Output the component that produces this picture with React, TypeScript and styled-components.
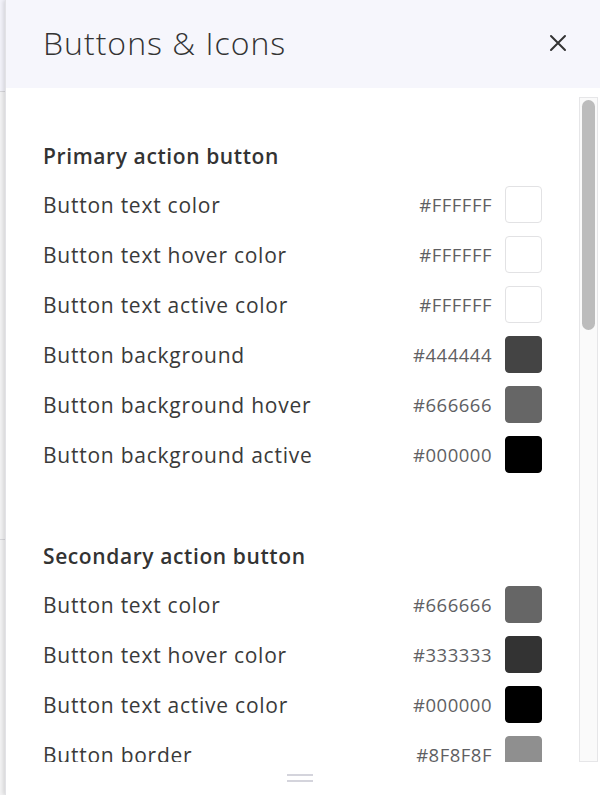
import React from "react";
import styled, { createGlobalStyle } from "styled-components";

const GlobalStyle = createGlobalStyle`
  html, body {
    margin: 0;
    padding: 0;
    width: 600px;
    height: 795px;
    overflow: hidden;
    background: #f4f4f6;
  }
  * { box-sizing: border-box; }
`;

const Screen = styled.div`
  display: flex;
  width: 600px;
  height: 795px;
  font-family: "Open Sans", "Noto Sans", sans-serif;
`;

/* sliver of the page behind the drawer */
const Backdrop = styled.div`
  width: 5px;
  flex: none;
  display: flex;
  flex-direction: column;
  background: #f3f3f4;
`;

const BackdropTop = styled.div`
  height: 92px;
  background: #f3f3fa;
  border-bottom: 1px solid #d8d8dc;
`;

const BackdropRule = styled.div<{ $h: number }>`
  height: ${(p) => p.$h}px;
  border-bottom: 1px solid #d8d8dc;
`;

const Drawer = styled.div`
  flex: 1;
  display: flex;
  flex-direction: column;
  background: #ffffff;
  box-shadow: -2px 0 4px rgba(0, 0, 0, 0.12);
  border-left: 1px solid #e2e2e6;
  min-width: 0;
`;

const Header = styled.header`
  height: 88px;
  flex: none;
  display: flex;
  align-items: center;
  justify-content: space-between;
  padding: 0 30px 3px 37px;
  background: #f6f6fc;
`;

const Title = styled.h1`
  margin: 0;
  font-size: 32px;
  font-weight: 300;
  color: #333333;
  letter-spacing: 1px;
`;

const CloseButton = styled.button`
  width: 24px;
  height: 24px;
  padding: 0;
  border: none;
  background: none;
  display: flex;
  align-items: center;
  justify-content: center;
  color: #333;
`;

const Body = styled.div`
  flex: 1;
  display: flex;
  min-height: 0;
  padding-top: 9px;
`;

const Scroller = styled.div`
  flex: 1;
  overflow: hidden;
  padding: 45px 0 0 37px;
  margin-bottom: 33px;
`;

const Track = styled.div`
  width: 19px;
  flex: none;
  margin: 0 2px 33px 0;
  border: 1px solid #e6e6e8;
  background: #fafafa;
  padding: 2px 2px;
`;

const Thumb = styled.div`
  height: 230px;
  border-radius: 7px;
  background: #bcbcbc;
`;

const Section = styled.section`
  display: flex;
  flex-direction: column;
  margin-bottom: 50px;
`;

const SectionTitle = styled.h2`
  margin: 0;
  height: 50px;
  line-height: 28px;
  font-size: 21px;
  font-weight: 600;
  color: #333333;
  letter-spacing: 0.6px;
`;

const Row = styled.div`
  display: flex;
  align-items: center;
  height: 50px;
  margin-top: -13px;
  margin-bottom: 13px;
  padding-right: 37px;
`;

const Label = styled.span`
  flex: 1;
  font-size: 21px;
  line-height: 28px;
  padding-top: 2px;
  color: #3a3a3a;
  letter-spacing: 0.75px;
`;

const Hex = styled.span`
  font-size: 18.5px;
  color: #5f5f63;
  letter-spacing: 0.5px;
  margin-right: 13px;
`;

const Swatch = styled.span<{ $color: string }>`
  width: 37px;
  height: 37px;
  border-radius: 4px;
  background: ${(p) => p.$color};
  border: 1px solid ${(p) => (p.$color === "#FFFFFF" ? "#e2e2e4" : p.$color)};
`;

const Footer = styled.div`
  height: 0;
  position: relative;
`;

const Handle = styled.div`
  position: absolute;
  left: 50%;
  bottom: 13px;
  width: 26px;
  height: 8px;
  margin-left: -16px;
  border-top: 2px solid #d4d4dc;
  border-bottom: 2px solid #d4d4dc;
`;

type Entry = { label: string; hex: string };

const sections: { title: string; rows: Entry[] }[] = [
  {
    title: "Primary action button",
    rows: [
      { label: "Button text color", hex: "#FFFFFF" },
      { label: "Button text hover color", hex: "#FFFFFF" },
      { label: "Button text active color", hex: "#FFFFFF" },
      { label: "Button background", hex: "#444444" },
      { label: "Button background hover", hex: "#666666" },
      { label: "Button background active", hex: "#000000" },
    ],
  },
  {
    title: "Secondary action button",
    rows: [
      { label: "Button text color", hex: "#666666" },
      { label: "Button text hover color", hex: "#333333" },
      { label: "Button text active color", hex: "#000000" },
      { label: "Button border", hex: "#8F8F8F" },
      { label: "Button border hover", hex: "#666666" },
    ],
  },
];

export default function App() {
  return (
    <>
      <GlobalStyle />
      <Screen>
        <Backdrop>
          <BackdropTop />
          <BackdropRule $h={448} />
        </Backdrop>
        <Drawer>
          <Header>
            <Title>Buttons &amp; Icons</Title>
            <CloseButton aria-label="Close">
              <svg width="18" height="18" viewBox="0 0 18 18">
                <path d="M2 2L16 16M16 2L2 16" stroke="#333" strokeWidth="2" strokeLinecap="round" />
              </svg>
            </CloseButton>
          </Header>
          <Body>
            <Scroller>
              {sections.map((s) => (
                <Section key={s.title}>
                  <SectionTitle>{s.title}</SectionTitle>
                  {s.rows.map((r) => (
                    <Row key={r.label}>
                      <Label>{r.label}</Label>
                      <Hex>{r.hex}</Hex>
                      <Swatch $color={r.hex} />
                    </Row>
                  ))}
                </Section>
              ))}
            </Scroller>
            <Track>
              <Thumb />
            </Track>
          </Body>
          <Footer>
            <Handle />
          </Footer>
        </Drawer>
      </Screen>
    </>
  );
}
